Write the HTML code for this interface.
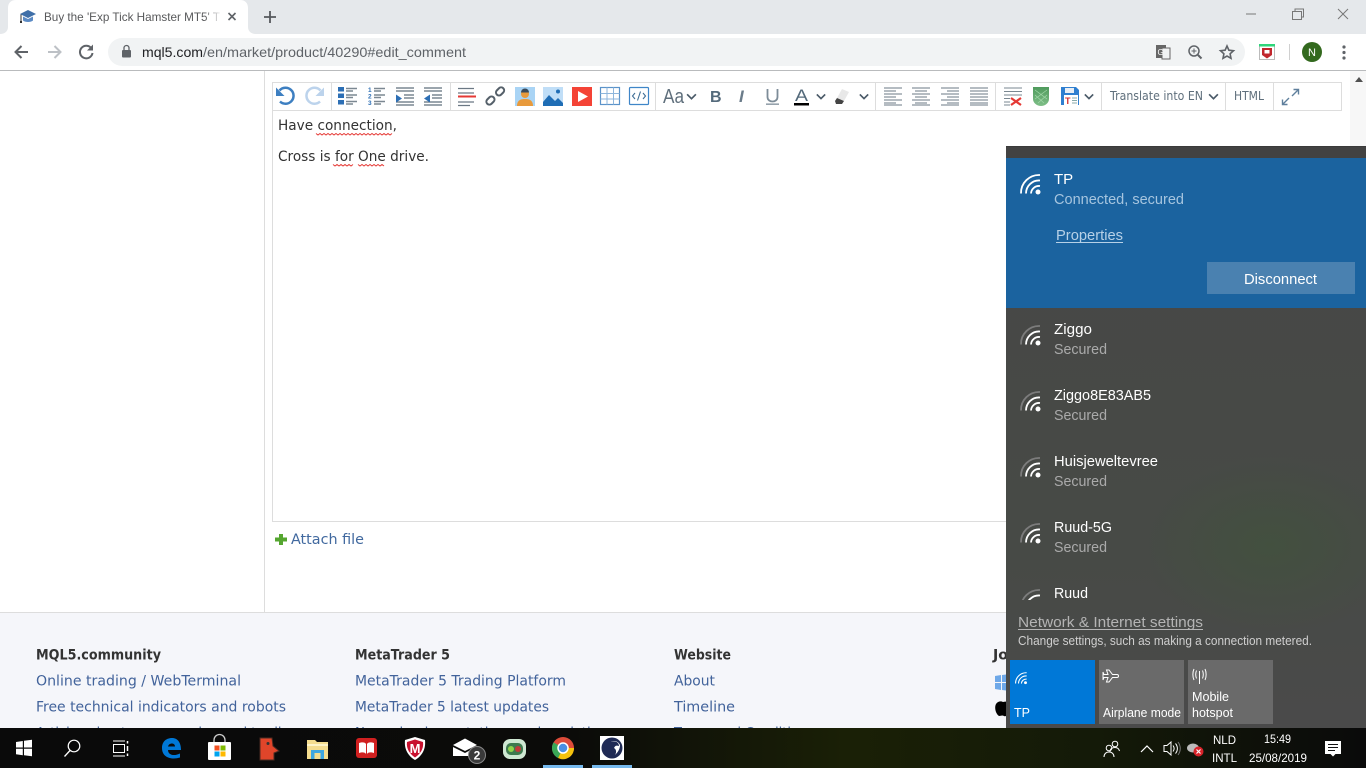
<!DOCTYPE html>
<html><head><meta charset="utf-8"><title>Buy the 'Exp Tick Hamster MT5'</title>
<style>
html,body{margin:0;padding:0;width:1366px;height:768px;overflow:hidden;background:#fff}
svg{display:block}
text{white-space:pre}
.s{font-family:"Liberation Sans",sans-serif}
.d{font-family:"DejaVu Sans",sans-serif}
.f{font-family:"DejaVu Sans",sans-serif;font-size:14.5px;fill:#42639b}
.h{font-family:"DejaVu Sans",sans-serif;font-size:14.5px;font-weight:bold;fill:#333}
.n{font-family:"Liberation Sans",sans-serif;font-size:15px;fill:#fff}
.m{font-family:"Liberation Sans",sans-serif;font-size:15px;fill:#aaa}
.t{font-family:"Liberation Sans",sans-serif;font-size:12.5px;fill:#fff}
</style></head><body>
<svg width="1366" height="768" viewBox="0 0 1366 768" xmlns="http://www.w3.org/2000/svg">
<defs>
<linearGradient id="fade" x1="0" x2="1"><stop offset="0" stop-color="#fff" stop-opacity="0"/><stop offset="1" stop-color="#fff"/></linearGradient>
<radialGradient id="green" cx="0.5" cy="0.5" r="0.5"><stop offset="0" stop-color="#3c5a34" stop-opacity=".38"/><stop offset="1" stop-color="#3c5a34" stop-opacity="0"/></radialGradient>
<linearGradient id="tb" x1="0" x2="1"><stop offset="0" stop-color="#0a0a0a"/><stop offset=".42" stop-color="#0b0b09"/><stop offset=".62" stop-color="#1a2006"/><stop offset=".8" stop-color="#141a08"/><stop offset="1" stop-color="#0a0a0a"/></linearGradient>
<linearGradient id="panelg" x1="0" y1="0" x2="0" y2="1"><stop offset="0" stop-color="#474747"/><stop offset=".7" stop-color="#474a46"/><stop offset="1" stop-color="#4a4a4a"/></linearGradient>
<linearGradient id="shield" x1="0" x2="0" y1="0" y2="1"><stop offset="0" stop-color="#4f9a5c"/><stop offset="1" stop-color="#7fbf88"/></linearGradient>
<clipPath id="listclip"><rect x="1006" y="308" width="360" height="292"/></clipPath>
<clipPath id="footclip"><rect x="0" y="613" width="1006" height="115"/></clipPath>
<symbol id="wifi" viewBox="0 0 24 24" overflow="visible">
<g fill="none" stroke-width="1.800" stroke-linecap="butt">
<path d="M1 21.500A18 18 0 0 1 20 3"/><path d="M6 21.500A13 13 0 0 1 20 8.500"/><path d="M11 21.500A8 8 0 0 1 20 14"/></g>
<circle cx="18" cy="20" r="2.500" fill="currentColor" stroke="none"/>
</symbol>
<symbol id="wifi2" viewBox="0 0 24 24" overflow="visible">
<path d="M1 21.500A18 18 0 0 1 20 3" fill="none" stroke="#7c7c7c" stroke-width="1.800"/>
<g fill="none" stroke="#fff" stroke-width="1.800"><path d="M6 21.500A13 13 0 0 1 20 8.500"/><path d="M11 21.500A8 8 0 0 1 20 14"/></g>
<circle cx="18" cy="20" r="2.500" fill="#fff"/>
</symbol>
<symbol id="chev" viewBox="0 0 12 8"><path d="M1 1.500L6 6.500L11 1.500" fill="none" stroke="#4a5a68" stroke-width="2"/></symbol>
</defs>

<!-- browser chrome -->
<rect width="1366" height="34" fill="#e5e8eb"/>
<path d="M0 34C5 34 8 31 8 27V8C8 3 11 0 16 0H240C245 0 248 3 248 8V27C248 31 251 34 256 34Z" fill="#fff"/>
<rect y="34" width="1366" height="36" fill="#fff"/>
<rect y="70" width="1366" height="1" fill="#b9bbbd"/>
<rect x="108" y="38" width="1137" height="28" rx="14" fill="#f1f3f4"/>

<!-- favicon cap -->
<path d="M20 14L28 10L36 14L28 18Z" fill="#3f6fa8"/><path d="M23 16.500V20.500C25 22.500 31 22.500 33 20.500V16.500L28 19Z" fill="#5b8ac4"/><path d="M21 14.500V22" stroke="#333" stroke-width="1"/><rect x="20" y="21" width="2" height="2" fill="#333"/>
<text x="44" y="21" class="s" font-size="12" fill="#58595b" textLength="176" lengthAdjust="spacingAndGlyphs">Buy the 'Exp Tick Hamster MT5' T</text>
<rect x="204" y="8" width="18" height="18" fill="url(#fade)"/>
<path d="M228.500 13L235.500 20M235.500 13L228.500 20" stroke="#5f6368" stroke-width="1.600"/>
<path d="M270 11V23M264 17H276" stroke="#55585c" stroke-width="1.800"/>

<!-- window controls -->
<path d="M1246 14H1256" stroke="#777" stroke-width="1"/>
<path d="M1292.500 11.500H1301.500V19.500H1292.500Z M1295 11.500V9H1303.500V17H1301.500" fill="none" stroke="#777" stroke-width="1"/>
<path d="M1338 9L1348 19M1348 9L1338 19" stroke="#777" stroke-width="1"/>

<!-- nav -->
<path d="M28 52H16M21.500 46L15.500 52L21.500 58" fill="none" stroke="#5f6368" stroke-width="2"/>
<path d="M48 52H60M54.500 46L60.500 52L54.500 58" fill="none" stroke="#bdc1c6" stroke-width="2"/>
<path d="M91.500 48.500A6.300 6.300 0 1 0 92.500 53" fill="none" stroke="#5f6368" stroke-width="2"/><path d="M93 44.500V50.500H87Z" fill="#5f6368"/>
<rect x="122" y="50" width="9" height="7.500" rx="1" fill="#5f6368"/><path d="M124 50V48A2.500 2.500 0 0 1 129 48V50" fill="none" stroke="#5f6368" stroke-width="1.300"/>
<text x="142" y="57" class="s" font-size="14" fill="#202124" textLength="61" lengthAdjust="spacingAndGlyphs">mql5.com</text>
<text x="203" y="57" class="s" font-size="14" fill="#5f6368" textLength="263" lengthAdjust="spacingAndGlyphs">/en/market/product/40290#edit_comment</text>

<!-- right toolbar icons -->
<rect x="1156" y="45" width="10" height="13" fill="#666"/><rect x="1162" y="48" width="8" height="11" fill="#f1f3f4" stroke="#666"/><text x="1157.500" y="55" class="s" font-size="8" fill="#fff">G</text>
<circle cx="1194" cy="51" r="5" fill="none" stroke="#5f6368" stroke-width="1.500"/><path d="M1198 55L1201.500 58.500" stroke="#5f6368" stroke-width="2"/><path d="M1191.500 51H1196.500M1194 48.500V53.500" stroke="#5f6368" stroke-width="1"/>
<path d="M1227 46L1228.900 50.200L1233.500 50.700L1230.100 53.800L1231 58.300L1227 56L1223 58.300L1223.900 53.800L1220.500 50.700L1225.100 50.200Z" fill="none" stroke="#5f6368" stroke-width="1.600"/>
<rect x="1259.500" y="44.500" width="15" height="15" fill="#fff" stroke="#bbb"/><rect x="1259" y="44" width="16" height="2.500" fill="#2fd67b"/><path d="M1262 48H1272V55L1267 58.500L1262 55Z" fill="#c1272d"/><rect x="1264.500" y="50" width="5" height="3.500" fill="#fff"/>
<rect x="1289" y="44" width="1" height="16" fill="#d0d0d0"/>
<circle cx="1312" cy="52" r="10" fill="#33691e"/><text x="1312" y="56" class="s" font-size="11" fill="#fff" text-anchor="middle">N</text>
<circle cx="1344" cy="47" r="1.600" fill="#5f6368"/><circle cx="1344" cy="52.500" r="1.600" fill="#5f6368"/><circle cx="1344" cy="58" r="1.600" fill="#5f6368"/>

<!-- page -->
<rect x="264" y="71" width="1" height="541" fill="#ddd"/>
<rect x="1350" y="71" width="16" height="80" fill="#f7f7f7"/>
<path d="M1355 82L1359 77L1363 82Z" fill="#505050"/>

<!-- editor -->
<rect x="272.500" y="82.500" width="1069" height="28" fill="#fff" stroke="#ddd"/>
<path d="M272.500 110V521.500H1006" fill="none" stroke="#ddd"/>
<g fill="#ddd"><rect x="331" y="82" width="1" height="28"/><rect x="450" y="82" width="1" height="28"/><rect x="655" y="82" width="1" height="28"/><rect x="875" y="82" width="1" height="28"/><rect x="995" y="82" width="1" height="28"/><rect x="1101" y="82" width="1" height="28"/><rect x="1225" y="82" width="1" height="28"/><rect x="1273" y="82" width="1" height="28"/></g>

<!-- undo redo -->
<path d="M279.500 90.500A8 8 0 1 1 280 101.500" fill="none" stroke="#3d7fc1" stroke-width="2.500"/><path d="M276 87.500V96H284.500Z" fill="#3d7fc1"/>
<path d="M320.500 90.500A8 8 0 1 0 320 101.500" fill="none" stroke="#bcd3ec" stroke-width="2.500"/><path d="M324 87.500V96H315.500Z" fill="#bcd3ec"/>
<!-- lists -->
<g fill="#2d6fb5"><rect x="338" y="87" width="6" height="4.500"/><rect x="338" y="93.500" width="6" height="4.500"/><rect x="338" y="100" width="6" height="4.500"/></g>
<path d="M346 88.500H357M346 91H353M346 95H357M346 97.500H353M346 101.500H357M346 104H353" stroke="#7c8892" stroke-width="1.500"/>
<g class="s" font-size="6.500" fill="#2d6fb5" font-weight="bold"><text x="368" y="92">1</text><text x="368" y="98.500">2</text><text x="368" y="105">3</text></g>
<path d="M374 88.500H385M374 91H381M374 95H385M374 97.500H381M374 101.500H385M374 104H381" stroke="#7c8892" stroke-width="1.500"/>
<path d="M396 88H414M396 91H414M404 95H414M404 98H414M396 102H414M396 105H414" stroke="#5f6f7c" stroke-width="1.200"/>
<path d="M396 94.500L402 98.500L396 102.500Z" fill="#2d6fb5"/>
<path d="M424 88H442M424 91H442M432 95H442M432 98H442M424 102H442M424 105H442" stroke="#5f6f7c" stroke-width="1.200"/>
<path d="M430 94.500L424 98.500L430 102.500Z" fill="#2d6fb5"/>
<!-- hr -->
<path d="M458 88.500H474M458 93H474M458 102H474M458 105.500H470" stroke="#6b7884" stroke-width="1.300"/><rect x="458" y="95.500" width="18" height="2" fill="#e53935"/>
<!-- link -->
<g fill="none" stroke="#55606a" stroke-width="2"><rect x="-6" y="-3" width="9" height="6" rx="3" transform="translate(491.500 99.500) rotate(-45)"/><rect x="-3" y="-3" width="9" height="6" rx="3" transform="translate(499 92.500) rotate(-45)"/></g>
<!-- person -->
<rect x="515" y="87" width="20" height="19" fill="#a9d4f5"/><circle cx="525" cy="94" r="4" fill="#e89a3c"/><path d="M517 106C517 100 521 99 525 99C529 99 533 100 533 106Z" fill="#e89a3c"/><path d="M521 92.500A4 4 0 0 1 529 92.500H521Z" fill="#3a4a5a"/>
<!-- image -->
<rect x="543" y="87" width="20" height="19" fill="#c0def7"/><circle cx="558" cy="91.500" r="2" fill="#1f6db5"/><path d="M543 106V102L549 95L555 101L558 98L563 103V106Z" fill="#1f6db5"/>
<!-- video -->
<rect x="572" y="87" width="20" height="19" fill="#f44336"/><path d="M578 91V102L588 96.500Z" fill="#fff"/>
<!-- table -->
<rect x="600.500" y="87.500" width="19" height="17" fill="#fff" stroke="#5b93c9" stroke-width="1.200"/><path d="M600.500 93.500H619.500M600.500 99H619.500M607 87.500V104.500M613.500 87.500V104.500" stroke="#8eb6dc"/>
<!-- code -->
<rect x="629.500" y="87.500" width="19" height="17" rx="1" fill="#fff" stroke="#3f86c8" stroke-width="1.200"/><path d="M635 93L632.500 96L635 99M643 93L645.500 96L643 99M640.500 91.500L637.500 100.500" fill="none" stroke="#3f6e96" stroke-width="1.100"/>
<!-- text format -->
<text x="663" y="103" class="s" font-size="20" fill="#5f6f7c" textLength="21" lengthAdjust="spacingAndGlyphs">Aa</text>
<use href="#chev" x="686" y="93" width="11" height="7"/>
<text x="710" y="102" class="s" font-size="16" font-weight="bold" fill="#546a7b">B</text>
<text x="739" y="102" class="s" font-size="17" font-style="italic" font-weight="bold" fill="#6b7c8a">I</text>
<path d="M767.500 89V97C767.500 103 777.500 103 777.500 97V89" fill="none" stroke="#7d8c98" stroke-width="1.800"/><rect x="766" y="103.500" width="13" height="1.300" fill="#7d8c98"/>
<text x="795" y="101" class="s" font-size="17" fill="#546a7b" textLength="13" lengthAdjust="spacingAndGlyphs">A</text><rect x="794" y="103" width="15" height="2.500" fill="#000"/>
<use href="#chev" x="816" y="93" width="10" height="7"/>
<path d="M842 89L849 92L844 101L837 98Z" fill="#e8e8e8"/><path d="M837 98L844 101L842 104H836L835 101Z" fill="#444"/>
<use href="#chev" x="859" y="93" width="10" height="7"/>
<!-- align -->
<path d="M884 88H902M884 91H896M884 94H902M884 97H896M884 100H902M884 103H896M884 105H902" stroke="#6b7884" stroke-width="1"/>
<path d="M912 88H930M915 91H927M912 94H930M915 97H927M912 100H930M915 103H927M912 105H930" stroke="#6b7884" stroke-width="1"/>
<path d="M941 88H959M947 91H959M941 94H959M947 97H959M941 100H959M947 103H959M941 105H959" stroke="#6b7884" stroke-width="1"/>
<path d="M970 88H988M970 91H988M970 94H988M970 97H988M970 100H988M970 103H988M970 105H988" stroke="#6b7884" stroke-width="1"/>
<!-- clear -->
<path d="M1004 88H1022M1004 91.500H1022M1004 95H1022M1004 98.500H1010M1004 102H1010M1004 105H1010" stroke="#7a8791" stroke-width="1"/>
<path d="M1011 98L1021 105M1021 98L1011 105" stroke="#e53935" stroke-width="2.200"/>
<!-- shield -->
<path d="M1033 87H1049V99C1049 103 1045 106 1041 106C1037 106 1033 103 1033 99Z" fill="url(#shield)"/><path d="M1035 90L1047 99M1035 95L1044 103M1047 90L1035 99M1047 95L1038 103" stroke="#a3d8aa" stroke-width=".7"/>
<!-- save -->
<path d="M1061 87H1076L1079 90V105H1061Z" fill="#2f7fd0"/><rect x="1065" y="88" width="9" height="5" fill="#e8eef5"/><rect x="1064" y="95" width="14" height="10" fill="#fff"/><text x="1065" y="104" class="s" font-size="9" font-weight="bold" fill="#d32f2f">T</text><path d="M1072 98H1077M1072 100.500H1077M1072 103H1077" stroke="#8aa" stroke-width="1"/>
<use href="#chev" x="1084" y="93" width="10" height="7"/>
<text x="1110" y="100" class="d" font-size="12.500" fill="#5f6f7c" textLength="93" lengthAdjust="spacingAndGlyphs">Translate into EN</text>
<use href="#chev" x="1208" y="93" width="11" height="7"/>
<text x="1234" y="100" class="d" font-size="12.500" fill="#5f6f7c" textLength="30" lengthAdjust="spacingAndGlyphs">HTML</text>
<path d="M1292 96L1298 90M1293.500 89.500H1298.500V94.500" fill="none" stroke="#5f7f9c" stroke-width="1.400"/>
<path d="M1289 98L1283 104M1287.500 104.500H1282.500V99.500" fill="none" stroke="#5f7f9c" stroke-width="1.400"/>

<!-- editor text -->
<text x="278" y="130" class="d" font-size="14" fill="#333" textLength="119" lengthAdjust="spacingAndGlyphs">Have connection,</text>
<text x="278" y="161" class="d" font-size="14" fill="#333" textLength="151" lengthAdjust="spacingAndGlyphs">Cross is for One drive.</text>
<g fill="none" stroke="#e53935" stroke-width="1"><path d="M316 133.500l2 1.500 2-1.500 2 1.500 2-1.500 2 1.500 2-1.500 2 1.500 2-1.500 2 1.500 2-1.500 2 1.500 2-1.500 2 1.500 2-1.500 2 1.500 2-1.500 2 1.500 2-1.500 2 1.500 2-1.500 2 1.500 2-1.500 2 1.500 2-1.500 2 1.500 2-1.500 2 1.500 2-1.500 2 1.500 2-1.500 2 1.500 2-1.500 2 1.500 2-1.500 2 1.500 2-1.500 2 1.500 2-1.500"/>
<path d="M333 164.500l2 1.500 2-1.500 2 1.500 2-1.500 2 1.500 2-1.500 2 1.500 2-1.500 2 1.500 2-1.500"/>
<path d="M358 164.500l2 1.500 2-1.500 2 1.500 2-1.500 2 1.500 2-1.500 2 1.500 2-1.500 2 1.500 2-1.500 2 1.500 2-1.500 2 1.500"/></g>

<!-- attach -->
<path d="M279 534H283V537.500H287V541.500H283V545H279V541.500H275V537.500H279Z" fill="#55a630"/>
<text x="291" y="544" class="d" font-size="14.500" fill="#41699f" textLength="73" lengthAdjust="spacingAndGlyphs">Attach file</text>

<!-- footer -->
<rect y="612" width="1006" height="1" fill="#ddd"/>
<rect y="613" width="1006" height="115" fill="#f5f6fa"/>
<g clip-path="url(#footclip)">
<text x="36" y="659.500" class="h" textLength="125" lengthAdjust="spacingAndGlyphs">MQL5.community</text>
<text x="36" y="685.500" class="f" textLength="205" lengthAdjust="spacingAndGlyphs">Online trading / WebTerminal</text>
<text x="36" y="711.500" class="f" textLength="250" lengthAdjust="spacingAndGlyphs">Free technical indicators and robots</text>
<text x="36" y="737.500" class="f" textLength="262" lengthAdjust="spacingAndGlyphs">Articles about programming and trading</text>
<text x="355" y="659.500" class="h" textLength="95" lengthAdjust="spacingAndGlyphs">MetaTrader 5</text>
<text x="355" y="685.500" class="f" textLength="211" lengthAdjust="spacingAndGlyphs">MetaTrader 5 Trading Platform</text>
<text x="355" y="711.500" class="f" textLength="194" lengthAdjust="spacingAndGlyphs">MetaTrader 5 latest updates</text>
<text x="355" y="737.500" class="f" textLength="250" lengthAdjust="spacingAndGlyphs">News, implementations and analytics</text>
<text x="674" y="659.500" class="h" textLength="57" lengthAdjust="spacingAndGlyphs">Website</text>
<text x="674" y="685.500" class="f" textLength="41" lengthAdjust="spacingAndGlyphs">About</text>
<text x="674" y="711.500" class="f" textLength="61" lengthAdjust="spacingAndGlyphs">Timeline</text>
<text x="674" y="737.500" class="f" textLength="140" lengthAdjust="spacingAndGlyphs">Terms and Conditions</text>
<text x="993" y="659.500" class="h" textLength="30" lengthAdjust="spacingAndGlyphs">Join</text>
<path d="M995 676L1001 675V682H995ZM1002 675L1010 674V682H1002ZM995 683H1001V690L995 689ZM1002 683H1010V691L1002 690Z" fill="#6ea8e8"/>
<path d="M1003 702C1006 701 1008 702 1009 703C1006 705 1006 710 1010 711C1008 715 1006 717 1004 716C1002 715 1001 716 999 716C996 714 994 708 996 704C998 701 1001 701 1003 702Z" fill="#000"/>
</g>

<!-- network panel -->
<rect x="1006" y="146" width="360" height="582" fill="url(#panelg)"/>
<rect x="1006" y="146" width="360" height="12" fill="#424242"/>
<rect x="1006" y="146" width="360" height="1" fill="#3a3a3a"/>
<ellipse cx="1270" cy="545" rx="130" ry="90" fill="url(#green)"/>
<rect x="1006" y="158" width="360" height="150" fill="#1b639f"/>
<rect x="1207" y="262" width="148" height="32" fill="#4a81b0"/>

<use href="#wifi" x="1020" y="172" width="24" height="24" color="#fff" stroke="#fff"/>
<text x="1054" y="184" class="n" font-size="15">TP</text>
<text x="1054" y="204" class="m" style="fill:#a6c5df" textLength="130" lengthAdjust="spacingAndGlyphs">Connected, secured</text>
<text x="1056" y="240" class="m" style="fill:#b7d1e7" textLength="67" lengthAdjust="spacingAndGlyphs">Properties</text>
<rect x="1056" y="242" width="67" height="1" fill="#b7d1e7"/>
<text x="1244" y="284" class="n" textLength="73" lengthAdjust="spacingAndGlyphs">Disconnect</text>

<g clip-path="url(#listclip)">
<use href="#wifi2" x="1020" y="323" width="24" height="24"/><use href="#wifi2" x="1020" y="389" width="24" height="24"/><use href="#wifi2" x="1020" y="455" width="24" height="24"/><use href="#wifi2" x="1020" y="521" width="24" height="24"/><use href="#wifi2" x="1020" y="587" width="24" height="24"/>
<text x="1054" y="334" class="n" textLength="38" lengthAdjust="spacingAndGlyphs">Ziggo</text>
<text x="1054" y="354" class="m" textLength="53" lengthAdjust="spacingAndGlyphs">Secured</text>
<text x="1054" y="400" class="n" textLength="97" lengthAdjust="spacingAndGlyphs">Ziggo8E83AB5</text>
<text x="1054" y="420" class="m" textLength="53" lengthAdjust="spacingAndGlyphs">Secured</text>
<text x="1054" y="466" class="n" textLength="104" lengthAdjust="spacingAndGlyphs">Huisjeweltevree</text>
<text x="1054" y="486" class="m" textLength="53" lengthAdjust="spacingAndGlyphs">Secured</text>
<text x="1054" y="532" class="n" textLength="58" lengthAdjust="spacingAndGlyphs">Ruud-5G</text>
<text x="1054" y="552" class="m" textLength="53" lengthAdjust="spacingAndGlyphs">Secured</text>
<text x="1054" y="598" class="n" textLength="34" lengthAdjust="spacingAndGlyphs">Ruud</text>
</g>

<text x="1018" y="627" class="m" style="fill:#b4b4b4" textLength="185" lengthAdjust="spacingAndGlyphs">Network &amp; Internet settings</text>
<rect x="1018" y="629" width="185" height="1" fill="#b4b4b4"/>
<text x="1018" y="645" class="t" style="fill:#cfcfcf" textLength="294" lengthAdjust="spacingAndGlyphs">Change settings, such as making a connection metered.</text>

<rect x="1010" y="660" width="85" height="64" fill="#0078d7"/>
<rect x="1099" y="660" width="85" height="64" fill="#6a6a6a"/>
<rect x="1188" y="660" width="85" height="64" fill="#6a6a6a"/>
<use href="#wifi" x="1015" y="671" width="14" height="14" color="#fff" stroke="#fff"/>
<text x="1014" y="717" class="t">TP</text>
<path d="M1104 674.500H1108L1106.500 670H1109L1112.500 674.500H1117C1119 674.500 1119 677.500 1117 677.500H1112.500L1109 682H1106.500L1108 677.500H1104L1103 680V672Z" fill="none" stroke="#fff" stroke-width="1"/>
<text x="1103" y="717" class="t" textLength="78" lengthAdjust="spacingAndGlyphs">Airplane mode</text>
<path d="M1199.500 671V684" stroke="#fff"/><path d="M1196.500 670.500C1195.500 673 1195.500 676 1196.500 678.500M1202.500 670.500C1203.500 673 1203.500 676 1202.500 678.500M1194 669C1192.500 672 1192.500 677 1194 680M1205 669C1206.500 672 1206.500 677 1205 680" fill="none" stroke="#fff" stroke-width="1"/>
<text x="1192" y="701" class="t" textLength="37" lengthAdjust="spacingAndGlyphs">Mobile</text>
<text x="1192" y="717" class="t" textLength="41" lengthAdjust="spacingAndGlyphs">hotspot</text>

<!-- taskbar -->
<rect y="728" width="1366" height="40" fill="url(#tb)"/>
<path d="M16 742L22.800 741V747.500H16ZM24 740.800L32 739.700V747.500H24ZM16 748.700H22.800V755.300L16 754.300ZM24 748.700H32V756.300L24 755.300Z" fill="#fff"/>
<circle cx="74" cy="746" r="5.800" fill="none" stroke="#fff" stroke-width="1.200"/><path d="M70 750.500L64.500 756.500" stroke="#fff" stroke-width="1.300"/>
<path d="M113 741H125M113 756H125" stroke="#fff" stroke-width="1"/><rect x="113.500" y="744.500" width="11" height="8" fill="none" stroke="#fff"/><path d="M127.500 741V743.500M127.500 746V751M127.500 753.500V756" stroke="#fff" stroke-width="1.500"/>
<!-- edge -->
<path d="M162 748C162 741 167 738 172 738C178 738 181 743 181 750H168C168 755 174 756.500 180 753.500V757.500C172 760 162 758 162 748ZM168 746.500H175C175 742.500 169 742.500 168 746.500Z" fill="#0078d7"/>
<!-- store -->
<rect x="208" y="742" width="23" height="18" rx="1" fill="#fff"/><path d="M214 742V740A5.500 5.500 0 0 1 225 740V742" fill="none" stroke="#ccc" stroke-width="1.300"/>
<rect x="214.500" y="745.500" width="5" height="5" fill="#f25022"/><rect x="220.500" y="745.500" width="5" height="5" fill="#7fba00"/><rect x="214.500" y="751.500" width="5" height="5" fill="#00a4ef"/><rect x="220.500" y="751.500" width="5" height="5" fill="#ffb900"/>
<!-- red -->
<path d="M260 738H272L273 746L279 751L274 753V760H260Z" fill="#e0452a" stroke="#4a2a22"/><circle cx="268" cy="743.500" r="1.500" fill="#333"/>
<!-- folder -->
<path d="M307 740H315L317 742H328V759H307Z" fill="#f5dd8f"/><rect x="307" y="744" width="21" height="2" fill="#fff4c8"/><path d="M311 759V750H324V759H320.500V753H314.500V759Z" fill="#3fa7e0"/>
<!-- book -->
<rect x="356" y="738" width="21" height="20" rx="3" fill="#d02020"/><path d="M359 743C362 742 365 742 366 744V754C365 752 362 752 359 753ZM374 743C371 742 368 742 367 744V754C368 752 371 752 374 753Z" fill="#fff"/>
<!-- mcafee -->
<path d="M405 740L415 737L425 740C426 749 422 756 415 760C408 756 404 749 405 740Z" fill="#fff"/><path d="M407 742L415 739.500L423 742C424 749 420 754 415 757.500C410 754 406 749 407 742Z" fill="#c8102e"/><text x="415" y="753" class="s" font-size="13" font-weight="bold" fill="#fff" text-anchor="middle">M</text>
<!-- mail -->
<path d="M453 745L465 738.500L477 745L465 751Z" fill="#fff"/><path d="M453 747V756H472V754L476 750V747L465 753Z" fill="#fff"/>
<circle cx="477" cy="755" r="8.500" fill="#3a3a3a" stroke="#888"/><text x="477" y="759.500" class="s" font-size="12" font-weight="bold" fill="#fff" text-anchor="middle">2</text>
<!-- green -->
<rect x="503" y="739" width="23" height="20" rx="7" fill="#cfe8d2"/><rect x="506" y="743" width="17" height="12" rx="5" fill="#3e7a4e"/><circle cx="511" cy="749" r="3" fill="#8fd34a"/><circle cx="518" cy="749" r="3" fill="#c23a3a"/>
<!-- chrome -->
<circle cx="563" cy="748" r="11" fill="#dd4b39"/><path d="M563 748L553.500 742.500A11 11 0 0 0 558 758Z" fill="#3aa757"/><path d="M563 748L558 758A11 11 0 0 0 574 748Z" fill="#f4c20d"/><path d="M553.500 742.500L558 758L563 748Z" fill="#3aa757"/><circle cx="563" cy="748" r="5" fill="#4a90e2" stroke="#fff" stroke-width="1.500"/>
<!-- app -->
<rect x="600" y="736" width="24" height="24" fill="#fff"/><circle cx="612" cy="748" r="10.500" fill="#1f2a55"/><path d="M611 742C616 740 619 743 619 746C616 745 615 746 614 748C616 749 617 752 615 755C618 752 620 749 620 745C618 741 614 740 611 742Z" fill="#fff"/>
<rect x="543" y="765" width="40" height="3" fill="#76b9ed"/><rect x="592" y="765" width="40" height="3" fill="#76b9ed"/>

<!-- tray -->
<g fill="none" stroke="#fff" stroke-width="1"><circle cx="1115" cy="744" r="2.800"/><path d="M1110 752C1110 749 1112 747.500 1115 747.500C1117.500 747.500 1119 749 1119.500 751"/><circle cx="1109" cy="748" r="2.800"/><path d="M1104 757C1104 754 1106 752 1109 752C1112 752 1114 754 1114 757"/></g>
<path d="M1141 752L1147 746L1153 752" fill="none" stroke="#fff" stroke-width="1.200"/>
<path d="M1164 745.500H1167L1171 742V755L1167 751.500H1164Z" fill="none" stroke="#fff" stroke-width="1"/><path d="M1173 745.500C1174.500 747.500 1174.500 749.500 1173 751.500M1175.500 743.500C1178 746.500 1178 750.500 1175.500 753.500" fill="none" stroke="#fff" stroke-width="1"/><path d="M1178 742C1181 746 1181 751 1178 755" fill="none" stroke="#777" stroke-width="1"/>
<ellipse cx="1193" cy="748" rx="6" ry="4.500" fill="#bbb"/><circle cx="1198.500" cy="751.500" r="5" fill="#d8232a"/><path d="M1196.500 749.500L1200.500 753.500M1200.500 749.500L1196.500 753.500" stroke="#fff" stroke-width="1.200"/>
<text x="1213" y="744" class="s" font-size="12" fill="#fff" textLength="23" lengthAdjust="spacingAndGlyphs">NLD</text>
<text x="1212" y="762" class="s" font-size="12" fill="#fff" textLength="25" lengthAdjust="spacingAndGlyphs">INTL</text>
<text x="1264" y="743" class="s" font-size="12" fill="#fff" textLength="27" lengthAdjust="spacingAndGlyphs">15:49</text>
<text x="1249" y="762" class="s" font-size="12" fill="#fff" textLength="58" lengthAdjust="spacingAndGlyphs">25/08/2019</text>
<path d="M1325 741H1341V754H1335.500L1333 756.500L1330.500 754H1325Z" fill="#fff"/><path d="M1328 744.500H1338M1328 747.500H1338M1328 750.500H1335" stroke="#111" stroke-width="1"/>
</svg>
</body></html>
